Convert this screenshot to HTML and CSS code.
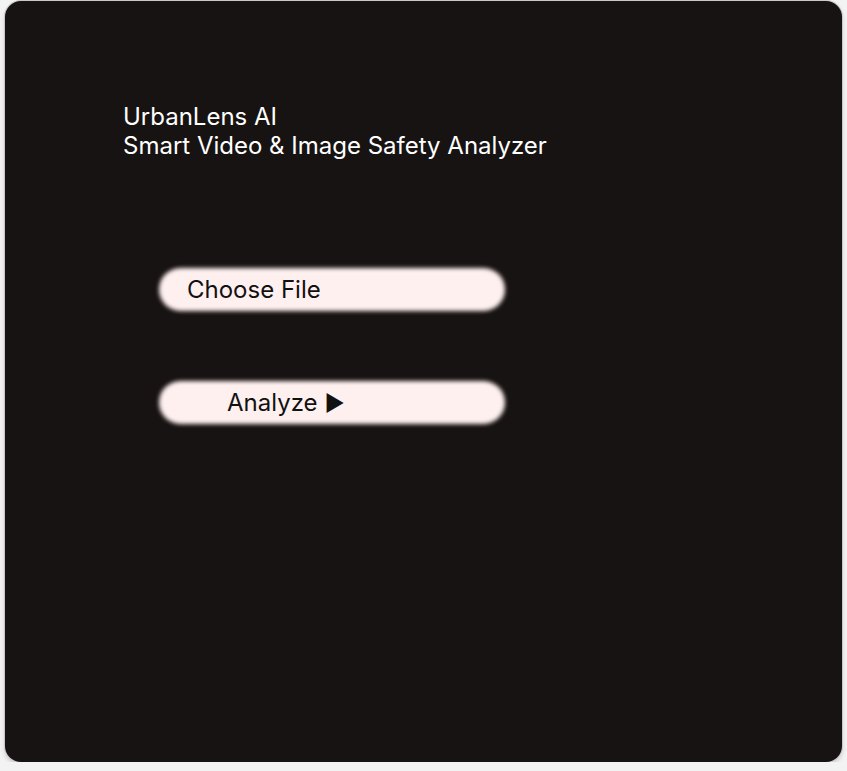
FILE: index.html
```html
<!DOCTYPE html>
<html lang="en">
<head>
<meta charset="utf-8">
<title>UrbanLens AI</title>
<link rel="stylesheet" href="styles.css">
</head>
<body>
<main class="card">
  <header class="heading">
    <div class="title">UrbanLens AI</div>
    <div class="subtitle">Smart Video &amp; Image Safety Analyzer</div>
  </header>
  <section class="actions">
    <button class="pill pill-file" type="button">Choose File</button>
    <button class="pill pill-analyze" type="button">Analyze <span class="play">▶</span></button>
  </section>
</main>
</body>
</html>
```
FILE: styles.css
```css
html, body {
  margin: 0;
  padding: 0;
  background: #f3f3f3;
}
body {
  padding: 1px 5px 0 5px;
  font-family: Inter, "Liberation Sans", sans-serif;
}
.card {
  box-sizing: border-box;
  width: 837px;
  height: 761px;
  background: #171312;
  border-radius: 16px;
  box-shadow: 0 0 0 1px #c9c9c9, 0 3px 5px rgba(0,0,0,0.18);
  padding: 101px 0 0 118px;
  display: flex;
  flex-direction: column;
}
.heading {
  color: #ffffff;
  font-size: 24px;
  line-height: 29px;
}
.actions {
  display: flex;
  flex-direction: column;
  gap: 70px;
  margin: 108px 0 0 36px;
}
.pill {
  position: relative;
  isolation: isolate;
  box-sizing: border-box;
  width: 346px;
  height: 43px;
  border: none;
  border-radius: 22px;
  background: transparent;
  color: #111;
  font-family: Inter, "Liberation Sans", sans-serif;
  font-size: 24px;
  text-align: left;
  padding: 0;
  display: flex;
  align-items: center;
}
.pill::before {
  content: "";
  position: absolute;
  inset: 0;
  z-index: -1;
  border-radius: 22px;
  background: #fff0f0;
  filter: blur(2px);
}
.pill-file { padding-left: 28px; }
.pill-analyze { padding-left: 68px; }
.play {
  margin-left: 7px;
  font-size: 22px;
}
```
